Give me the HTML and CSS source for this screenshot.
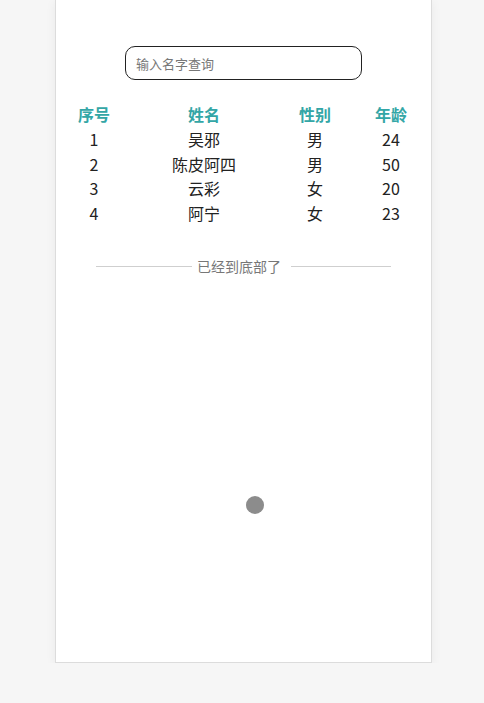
FILE: index.html
```html
<!DOCTYPE html>
<html lang="zh">
<head>
<meta charset="utf-8">
<link rel="stylesheet" href="styles.css">
</head>
<body>
<div class="card">
  <div class="search-wrap">
    <input class="search" type="text" placeholder="输入名字查询">
  </div>
  <div class="table">
    <div class="row head">
      <span>序号</span><span>姓名</span><span>性别</span><span>年龄</span>
    </div>
    <div class="row"><span>1</span><span>吴邪</span><span>男</span><span>24</span></div>
    <div class="row"><span>2</span><span>陈皮阿四</span><span>男</span><span>50</span></div>
    <div class="row"><span>3</span><span>云彩</span><span>女</span><span>20</span></div>
    <div class="row"><span>4</span><span>阿宁</span><span>女</span><span>23</span></div>
  </div>
  <div class="end">
    <span class="line left"></span>
    <span class="end-text">已经到底部了</span>
    <span class="line right"></span>
  </div>
  <div class="dot"></div>
</div>
</body>
</html>
```
FILE: styles.css
```css
html, body {
  margin: 0;
  padding: 0;
  background: #f6f6f6;
  font-family: "Noto Sans CJK SC", "Noto Sans", sans-serif;
}
.card {
  position: relative;
  box-sizing: border-box;
  width: 377px;
  height: 663px;
  margin-left: 55px;
  background: #fff;
  border: 1px solid #dcdcdc;
  border-top: none;
  box-shadow: 0 2px 10px rgba(0,0,0,0.06);
  padding-top: 46px;
}
.search-wrap {
  padding-left: 69px;
}
.search {
  display: block;
  box-sizing: border-box;
  width: 237px;
  height: 34px;
  border: 1px solid #222;
  border-radius: 10px;
  padding: 0 10px;
  font-family: "Noto Sans CJK SC", sans-serif;
  font-size: 13px;
  color: #333;
  outline: none;
  background: #fff;
}
.search::placeholder {
  color: #777;
}
.table {
  margin-top: 21px;
  padding-left: 9px;
}
.row {
  display: grid;
  grid-template-columns: 58px 162px 60px 92px;
  height: 24.6px;
  line-height: 24.6px;
  font-size: 16px;
  color: #222;
  text-align: center;
}
.row.head {
  height: 26px;
  line-height: 26px;
  color: #33a6a6;
  font-weight: bold;
}
.end {
  display: flex;
  align-items: center;
  margin-top: 31px;
  padding-left: 40px;
  font-size: 14px;
  color: #777;
}
.line {
  display: block;
  height: 1px;
  background: #cfcfcf;
}
.line.left {
  width: 96px;
  margin-right: 5px;
}
.line.right {
  width: 100px;
  margin-left: 10px;
}
.end-text {
  line-height: 20px;
}
.dot {
  position: absolute;
  left: 190px;
  top: 496px;
  width: 18px;
  height: 18px;
  border-radius: 50%;
  background: #8c8c8c;
}
```
